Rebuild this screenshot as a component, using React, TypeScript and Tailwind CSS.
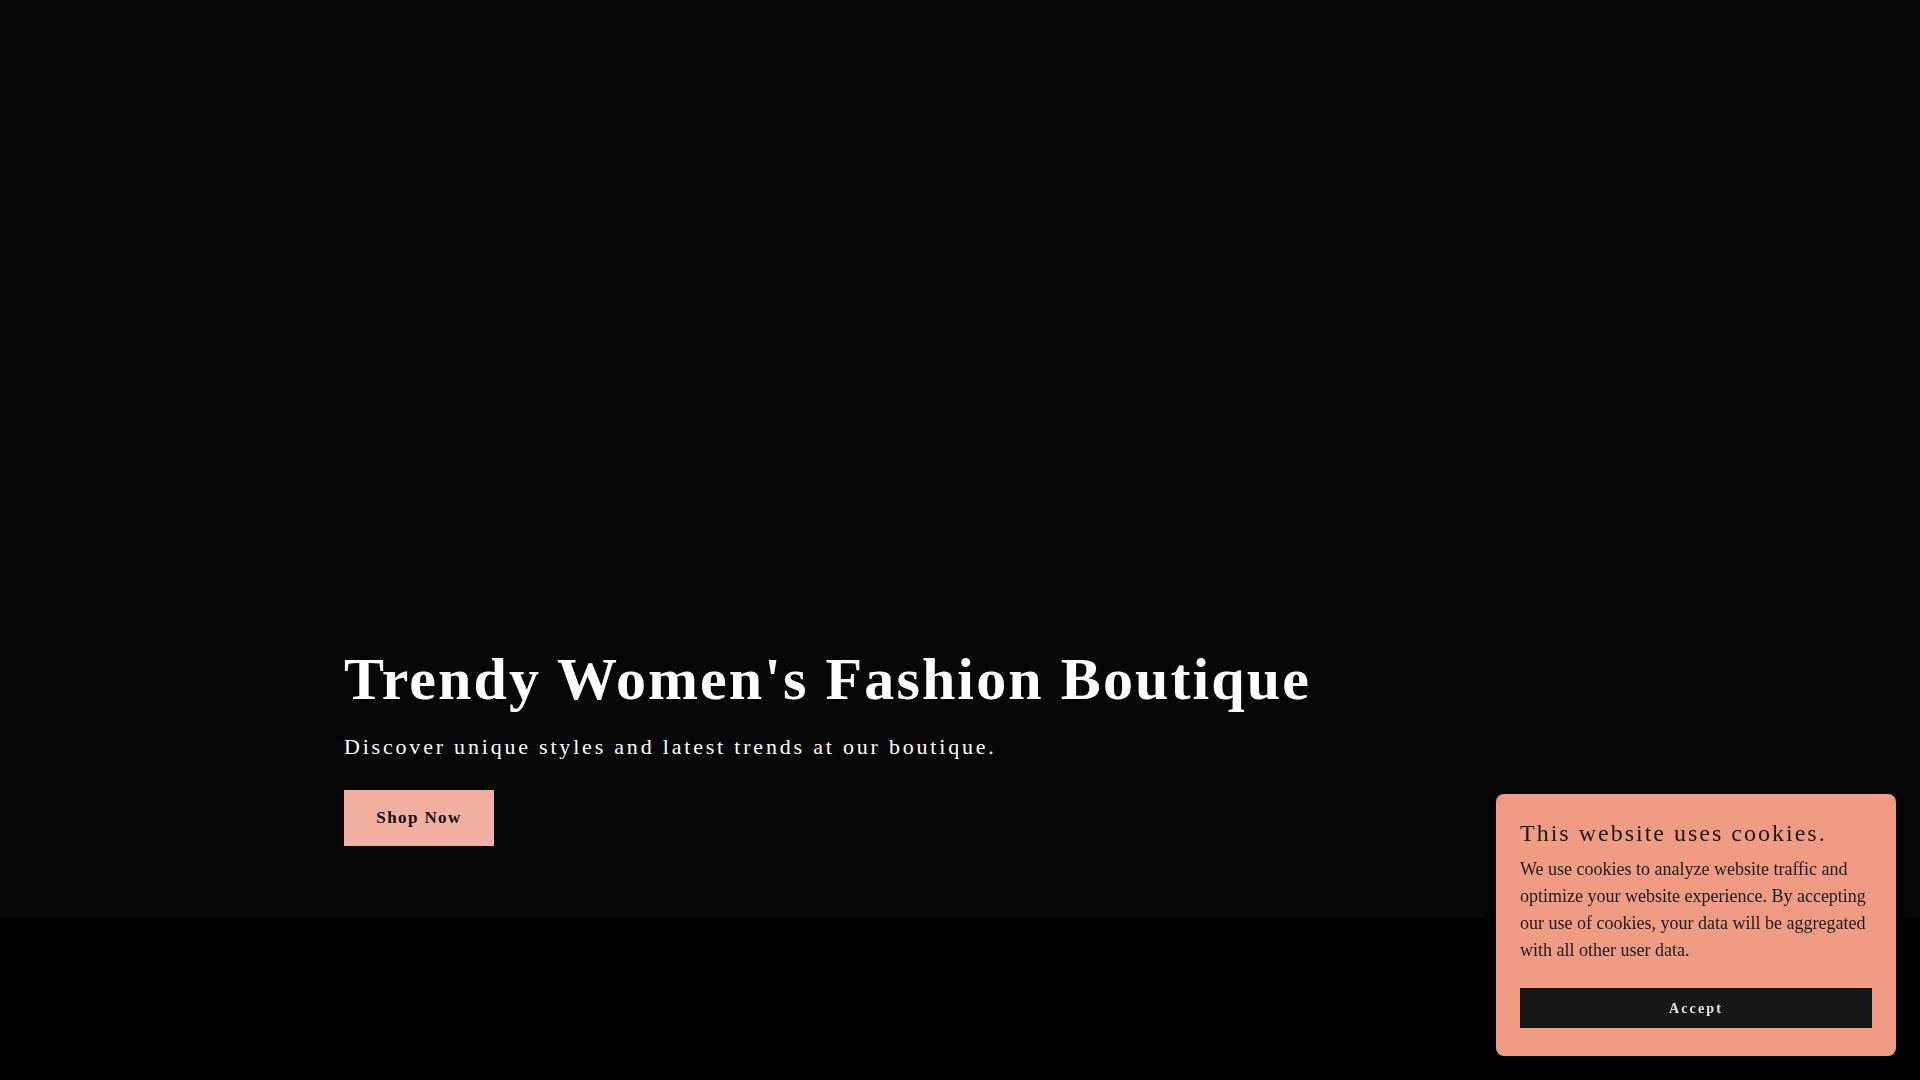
const serif = "font-['Liberation_Serif','Times_New_Roman',serif]";

export default function App() {
  return (
    <div className={`min-h-screen bg-black ${serif}`}>
      <section className="h-[918px] bg-[#060606] flex flex-col justify-end">
        <div className="mx-auto w-full max-w-[1280px] px-6 pb-[72px]">
          <h1 className="text-[60px] leading-[1.2] font-bold tracking-[2.1px] text-white">
            Trendy Women's Fashion Boutique
          </h1>
          <p className="mt-[15px] text-[22px] leading-[1.5] tracking-[2.8px] text-white">
            Discover unique styles and latest trends at our boutique.
          </p>
          <a
            href="#"
            className="mt-[27px] flex h-[56px] w-[150px] items-center justify-center bg-[#F3AFA0] text-[17px] font-bold tracking-[1.4px] text-[#111]"
          >
            Shop Now
          </a>
        </div>
      </section>

      <CookieBanner />
    </div>
  );
}

function CookieBanner() {
  return (
    <div className="fixed bottom-6 right-6 w-[400px] rounded-lg bg-[#F09B83] px-6 pt-6 pb-7 text-[#1a1a1a] shadow-[0_0_12px_rgba(0,0,0,0.35)]">
      <h2 className="text-[24px] leading-[1.25] tracking-[2px]">
        This website uses cookies.
      </h2>
      <p className="mt-2 text-[18px] leading-[1.5]">
        We use cookies to analyze website traffic and optimize your website
        experience. By accepting our use of cookies, your data will be
        aggregated with all other user data.
      </p>
      <button className="mt-6 flex h-10 w-full items-center justify-center bg-[#171717] text-[14px] font-bold tracking-[0.15em] text-[#e5e5e5]">
        Accept
      </button>
    </div>
  );
}
